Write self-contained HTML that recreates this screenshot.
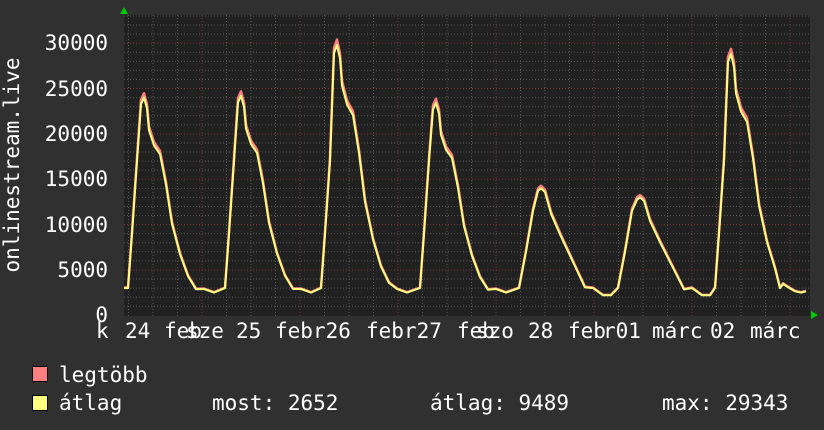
<!DOCTYPE html>
<html><head><meta charset="utf-8"><style>
html,body{margin:0;padding:0;background:#303030;}
svg{display:block}
text{font-family:"DejaVu Sans Mono","Liberation Mono",monospace;font-size:21px;fill:#fff}
</style></head><body>
<svg id="g" width="824" height="430" xmlns="http://www.w3.org/2000/svg">
<rect width="824" height="430" fill="#303030"/>
<rect x="124" y="15" width="686" height="301" fill="#212121"/>
<g id="grid"></g>
<polyline id="mx" fill="none" stroke="#ff7f7f" stroke-width="2.5" stroke-linejoin="round"/>
<polyline id="av" fill="none" stroke="#ffff7f" stroke-width="2" stroke-linejoin="round"/>
<polygon points="120,14 128,14 124,7" fill="#00cc00"/>
<polygon points="811,311 811,319 818,315" fill="#00cc00"/>
<g text-anchor="end">
<text x="108" y="50">30000</text><text x="108" y="96">25000</text><text x="108" y="141">20000</text>
<text x="108" y="186">15000</text><text x="108" y="232">10000</text><text x="108" y="277">5000</text>
<text x="108" y="322">0</text></g>
<text transform="translate(19,165) rotate(-90)" text-anchor="middle">onlinestream.live</text>
<g>
<text x="96" y="338">k</text><text x="125" y="338">24</text><text x="164" y="338">feb</text><text x="186" y="338">sze</text>
<text x="236" y="338">25</text><text x="275" y="338">febr26</text>
<text x="366" y="338">febr27</text><text x="457" y="338">feb</text><text x="476" y="338">szo</text>
<text x="528" y="338">28</text><text x="568" y="338">feb</text><text x="603" y="338">r01</text>
<text x="652" y="338">márc</text><text x="710" y="338">02</text><text x="750" y="338">márc</text>
</g>
<rect x="32.5" y="366.5" width="15" height="15" fill="#ff7f7f" stroke="#000"/>
<rect x="32.5" y="395.5" width="15" height="15" fill="#ffff7f" stroke="#000"/>
<text x="59" y="382">legtöbb</text>
<text x="59" y="410">átlag</text>
<text x="212" y="410">most: 2652</text>
<text x="430" y="410">átlag: 9489</text>
<text x="662" y="410">max: 29343</text>
</svg>
<script>
var g=document.getElementById('grid'),s='';
function Y(v){return 315.3-v*0.00907;}
for(var v=1000;v<=33000;v+=1000){var y=Y(v);if(y<15)break;var maj=v%5000==0;
s+='<line x1="124" x2="810" y1="'+y+'" y2="'+y+'" stroke="'+(maj?'#7a3535':'#555')+'" stroke-dasharray="1,2"/>';}
for(var x=128.5;x<810;x+=24.5){var maj=Math.abs(((x-202)/98)-Math.round((x-202)/98))<0.01;
s+='<line y1="15" y2="316" x1="'+x+'" x2="'+x+'" stroke="'+(maj?'#7a3535':'#555')+'" stroke-dasharray="1,2"/>';}
g.innerHTML=s;
var peaks=[[144,24000],[241,24200],[337,29800],[436,23400],[541,14000],[640,13000],[731,28800]];
var kp=[[124,3000]];
peaks.forEach(function(p,i){var P=p[0],V=p[1];
 if(V>20000){kp.push([P-16,3000],[P-12,9000],[P-7,17000],[P-3,V*0.97],[P,V],[P+3,V*0.95],[P+5,V*0.85],[P+10,V*0.78],[P+16,V*0.74],[P+22,V*0.6],[P+28,V*0.42],[P+36,V*0.28],[P+44,V*0.18],[P+52,V*0.12],[P+60,2900],[P+70,2500]);}
 else{kp.push([P-22,3000],[P-15,7000],[P-8,11500],[P-3,V*0.98],[P,V],[P+4,V*0.97],[P+10,V*0.8],[P+20,V*0.62],[P+32,V*0.42],[P+44,V*0.22],[P+52,3000],[P+62,2200],[P+70,2200]);}
});
kp.push([780,3000],[795,2650],[806,2650]);
kp.sort(function(a,b){return a[0]-b[0]});
var a='',m='';kp.forEach(function(k){a+=k[0]+','+Y(k[1]).toFixed(1)+' ';m+=k[0]+','+Y(k[1]*1.02).toFixed(1)+' ';});
document.getElementById('av').setAttribute('points',a);
document.getElementById('mx').setAttribute('points',m);
</script>
</body></html>
